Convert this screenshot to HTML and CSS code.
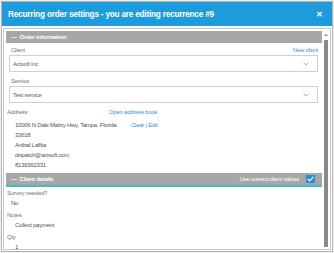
FILE: index.html
```html
<!DOCTYPE html>
<html lang="en">
<head>
    <meta charset="UTF-8">
    <title>Recurring order settings</title>
    <link rel="stylesheet" href="styles.css">
</head>
<body>
    <div class="dialog">
        <div class="title-bar">
            <span class="title">Recurring order settings - you are editing recurrence #9</span>
            <span class="close">&#x2715;</span>
        </div>
        <div class="dialog-body">
            <div class="scroll-area">
                <div class="section-bar">
                    <span class="bar-title">&mdash;&nbsp; Order information</span>
                </div>
                <div class="section">
                    <div class="label-row">
                        <span class="label">Client</span>
                        <a class="link">New client</a>
                    </div>
                    <div class="select">
                        <span>Actsoft Inc</span>
                        <svg class="chevron" width="6" height="4" viewBox="0 0 6 4"><path d="M0.5 0.5 L3 3 L5.5 0.5" fill="none" stroke="#aaa" stroke-width="0.9"/></svg>
                    </div>
                    <div class="label-row">
                        <span class="label">Service</span>
                    </div>
                    <div class="select">
                        <span>Test service</span>
                        <svg class="chevron" width="6" height="4" viewBox="0 0 6 4"><path d="M0.5 0.5 L3 3 L5.5 0.5" fill="none" stroke="#aaa" stroke-width="0.9"/></svg>
                    </div>
                    <div class="address-head">
                        <span class="plain-label">Address</span>
                        <a class="link">Open address book</a>
                    </div>
                    <div class="address">
                        <div class="address-lines">
                            <div>10006 N Dale Mabry Hwy, Tampa, Florida</div>
                            <div>33618</div>
                            <div>Anibal Laffita</div>
                            <div>dispatch@actsoft.com</div>
                            <div>8139362331</div>
                        </div>
                        <a class="link">Clear | Edit</a>
                    </div>
                </div>
                <div class="section-bar active">
                    <span class="bar-title">&mdash;&nbsp; Client details</span>
                    <span class="bar-right">Use current client values
                        <span class="checkbox"><svg width="7" height="6" viewBox="0 0 7 6"><path d="M0.8 3 L2.8 5 L6.2 0.8" fill="none" stroke="#fff" stroke-width="1.1"/></svg></span>
                    </span>
                </div>
                <div class="section details">
                    <div class="plain-label">Survey needed?</div>
                    <div class="value short">No</div>
                    <div class="plain-label">Notes</div>
                    <div class="value">Collect payment</div>
                    <div class="plain-label">Qty</div>
                    <div class="value">1</div>
                </div>
            </div>
            <div class="scrollbar">
                <span class="arrow"></span>
                <span class="thumb"></span>
            </div>
        </div>
    </div>
</body>
</html>
```

FILE: styles.css
```css
* {
    margin: 0;
    padding: 0;
    box-sizing: border-box;
}

body {
    width: 334px;
    height: 253px;
    font-family: 'Liberation Sans', Arial, sans-serif;
    background: #eeeeee;
    overflow: hidden;
}

.dialog {
    margin: 1px;
    height: 251px;
    border: 1px solid #b4b4b4;
    background: #fff;
    display: flex;
    flex-direction: column;
}

.title-bar {
    height: 24px;
    flex-shrink: 0;
    background: #1d9bdb;
    color: #fff;
    display: flex;
    align-items: center;
    justify-content: space-between;
    padding: 0 9px 0 6px;
}

.title {
    font-size: 8.2px;
    font-weight: bold;
    letter-spacing: -0.2px;
}

.close {
    font-size: 8px;
    font-weight: bold;
}

.dialog-body {
    flex: 1;
    display: flex;
    margin: 2px 1px 1px 1px;
    border: 1px solid #c8c8c8;
    padding: 2px 0 0 2px;
    overflow: hidden;
}

.scroll-area {
    flex: 1;
    overflow: hidden;
    font-size: 6px;
    letter-spacing: -0.25px;
}

.scrollbar {
    width: 8px;
    display: flex;
    flex-direction: column;
    align-items: center;
    padding-top: 3px;
}

.arrow {
    width: 0;
    height: 0;
    border-left: 2px solid transparent;
    border-right: 2px solid transparent;
    border-bottom: 2px solid #888;
}

.thumb {
    margin-top: 4px;
    width: 4px;
    flex: 1;
    background: #8a8a8a;
    margin-bottom: 2px;
}

.section-bar {
    height: 12px;
    background: #a7a7a7;
    color: #fff;
    display: flex;
    align-items: center;
    justify-content: space-between;
    padding: 0 7px 0 5px;
    font-weight: bold;
}

.section-bar.active {
    height: 14px;
    border-bottom: 2px solid #4cb6c4;
}

.bar-right {
    display: flex;
    align-items: center;
    gap: 7px;
    font-weight: normal;
}

.checkbox {
    width: 9px;
    height: 8px;
    background: #2a8fdb;
    display: flex;
    align-items: center;
    justify-content: center;
}

.section {
    padding: 2px 4px 3px 1px;
    color: #555;
}

.label-row {
    display: flex;
    justify-content: space-between;
    align-items: center;
    padding-left: 4px;
    height: 9px;
}

.label,
.plain-label {
    color: #777;
    line-height: 8px;
}

.link {
    color: #3b8fd4;
}

.select {
    height: 17px;
    margin: 1px 0 4px 2px;
    border: 1px solid #cfcfcf;
    display: flex;
    align-items: center;
    justify-content: space-between;
    padding: 0 8px 0 3px;
    color: #666;
}

.address-head {
    display: grid;
    grid-template-columns: 102px auto;
    line-height: 8px;
    padding-top: 1px;
}

.address {
    display: grid;
    grid-template-columns: 116px auto;
    padding: 4px 0 0 8px;
    line-height: 10px;
}

.details {
    padding-top: 2px;
}

.details .plain-label {
    margin-bottom: 2px;
}

.value {
    line-height: 8px;
    padding-left: 8px;
    margin-bottom: 4px;
}

.value.short {
    padding-left: 4px;
}
```
